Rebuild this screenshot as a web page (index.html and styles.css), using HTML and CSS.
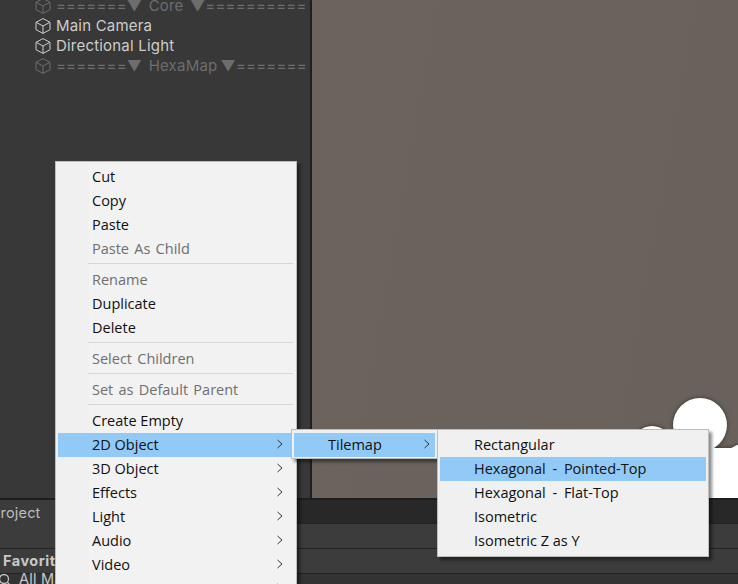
FILE: index.html
```html
<!DOCTYPE html>
<html lang="en">
<head>
<meta charset="utf-8">
<title>Unity Hierarchy Context Menu</title>
<link rel="stylesheet" href="styles.css">
</head>
<body>
<svg class="defs" width="0" height="0" aria-hidden="true">
  <symbol id="cube" viewBox="0 0 16 16">
    <path d="M8 .6 15 4.3V11.7L8 15.4 1 11.7V4.3ZM1 4.3 8 8 15 4.3M8 8V15.4" fill="none" stroke="currentColor" stroke-width="1" stroke-linejoin="round"/>
  </symbol>
  <symbol id="chev" viewBox="0 0 8 10">
    <path d="M1.5 1 6 5 1.5 9" fill="none" stroke="currentColor" stroke-width="1"/>
  </symbol>
</svg>
<div class="app">
  <div class="upper">
    <section class="hierarchy">
      <div class="row dim"><svg class="cube"><use href="#cube"/></svg><span class="rule">=======▼&nbsp; Core &nbsp;▼==========</span></div>
      <div class="row"><svg class="cube"><use href="#cube"/></svg><span>Main Camera</span></div>
      <div class="row"><svg class="cube"><use href="#cube"/></svg><span>Directional Light</span></div>
      <div class="row dim"><svg class="cube"><use href="#cube"/></svg><span class="rule">=======▼&nbsp; HexaMap ▼=======</span></div>
    </section>
    <section class="scene">
      <svg class="cloud" width="100" height="110" viewBox="0 0 100 110">
        <g fill="#fff">
          <circle cx="61" cy="27" r="27"/>
          <circle cx="13" cy="48" r="20"/>
          <circle cx="105" cy="68" r="22"/>
          <rect x="0" y="50" width="100" height="60"/>
        </g>
      </svg>
    </section>
  </div>
  <section class="bottom">
    <div class="tabs"><div class="tab">Project</div></div>
    <div class="bar"></div>
    <div class="bar favs"><span>Favorites</span></div>
    <div class="bar search">
      <svg class="lens" width="14" height="14" viewBox="0 0 14 14"><circle cx="6" cy="6" r="4.5" fill="none" stroke="#c4c4c4" stroke-width="1.3"/><path d="M9.5 9.5 13 13" stroke="#c4c4c4" stroke-width="1.3"/></svg>
      <span>All Materials</span>
    </div>
  </section>

  <div class="menu menu-main">
    <div class="item">Cut</div>
    <div class="item">Copy</div>
    <div class="item">Paste</div>
    <div class="item off">Paste As Child</div>
    <div class="sep"></div>
    <div class="item off">Rename</div>
    <div class="item">Duplicate</div>
    <div class="item">Delete</div>
    <div class="sep"></div>
    <div class="item off">Select Children</div>
    <div class="sep"></div>
    <div class="item off">Set as Default Parent</div>
    <div class="sep"></div>
    <div class="item">Create Empty</div>
    <div class="item hot">2D Object<svg class="chev"><use href="#chev"/></svg></div>
    <div class="item">3D Object<svg class="chev"><use href="#chev"/></svg></div>
    <div class="item">Effects<svg class="chev"><use href="#chev"/></svg></div>
    <div class="item">Light<svg class="chev"><use href="#chev"/></svg></div>
    <div class="item">Audio<svg class="chev"><use href="#chev"/></svg></div>
    <div class="item">Video<svg class="chev"><use href="#chev"/></svg></div>
    <div class="item">UI<svg class="chev"><use href="#chev"/></svg></div>
  </div>

  <div class="menu menu-tile">
    <div class="item hot">Tilemap<svg class="chev"><use href="#chev"/></svg></div>
  </div>

  <div class="menu menu-hex">
    <div class="item">Rectangular</div>
    <div class="item hot wide">Hexagonal - Pointed-Top</div>
    <div class="item wide">Hexagonal - Flat-Top</div>
    <div class="item">Isometric</div>
    <div class="item">Isometric Z as Y</div>
  </div>
</div>
</body>
</html>
```
FILE: styles.css
```css
* { box-sizing: border-box; }
html, body { margin: 0; padding: 0; background: #383838; }
.defs { position: absolute; }
.app {
  position: relative;
  width: 738px;
  height: 584px;
  overflow: hidden;
  display: flex;
  flex-direction: column;
  font-family: Inter, "Noto Sans", sans-serif;
  font-size: 15px;
  letter-spacing: 0.2px;
  color: #c8c8c8;
}
.upper { display: flex; height: 498px; flex: none; }
.hierarchy {
  width: 310px;
  flex: none;
  background: #383838;
  padding: 0 0 0 35px;
  overflow: hidden;
}
.row {
  display: flex;
  align-items: center;
  height: 20px;
  gap: 5px;
  white-space: nowrap;
  color: #cdcdcd;
  line-height: 18px;
}
.row:first-child { margin-top: -4px; }
.row.dim { color: #6d6d6d; }
.rule { word-spacing: -1.2px; }
.cube { width: 16px; height: 16px; flex: none; }
.scene {
  flex: 1;
  position: relative;
  background: linear-gradient(100deg, #6c635d, #69615b);
  border-left: 2px solid #1f1f1f;
  overflow: hidden;
}
.cloud {
  position: absolute;
  right: -1px;
  bottom: -10px;
  filter: drop-shadow(0 0 2px rgba(40, 35, 30, .8));
}
.bottom { flex: 1; display: flex; flex-direction: column; background: #323232; border-top: 2px solid #1e1e1e; }
.tabs { height: 24px; flex: none; background: #282828; border-bottom: 1px solid #222; }
.tab {
  width: 56px;
  height: 24px;
  background: #3c3c3c;
  line-height: 25px;
  font-size: 14.5px;
  text-indent: -9px;
  overflow: hidden;
  white-space: nowrap;
  color: #bcbcbc;
}
.bar { height: 25px; flex: none; background: #3c3c3c; border-bottom: 1px solid #232323; }
.favs { padding-left: 3px; line-height: 23px; font-weight: 700; color: #c8c8c8; font-size: 14.5px; letter-spacing: 0.5px; white-space: nowrap; }
.search { display: flex; align-items: flex-start; gap: 7px; background: #333; border: 0; white-space: nowrap; color: #c8c8c8; line-height: 10px; font-size: 14.5px; }
.lens { margin: -1px 0 0 -2px; flex: none; }

.menu {
  position: absolute;
  background: linear-gradient(90deg, #f0f0f0 33px, #f2f2f2 33px);
  border: 1px solid #bdbdbd;
  padding: 3px 2px;
  box-shadow: 3px 3px 3px rgba(0, 0, 0, .45);
  font-family: "Open Sans", "Noto Sans", sans-serif;
  font-size: 14.5px;
  letter-spacing: 0;
  color: #111;
}
.menu-main { left: 55px; top: 161px; width: 242px; }
.menu-tile { left: 291px; top: 429px; width: 147px; height: 30px; background: #f0f0f0; }
.menu-hex { left: 437px; top: 429px; width: 272px; background: #f0f0f0; }
.item {
  position: relative;
  height: 24px;
  line-height: 23px;
  padding-left: 34px;
  white-space: nowrap;
}
.item.off { color: #6f6f6f; word-spacing: 1.5px; }
.item.wide { word-spacing: 3px; }
.item.hot { background: #91c9f7; }
.sep { height: 1px; background: #d7d7d7; margin: 2px 1px 4px 30px; }
.chev {
  position: absolute;
  right: 10px;
  top: 6px;
  width: 8px;
  height: 10px;
  color: #333;
}
.menu-tile .chev { right: 4px; }
```
